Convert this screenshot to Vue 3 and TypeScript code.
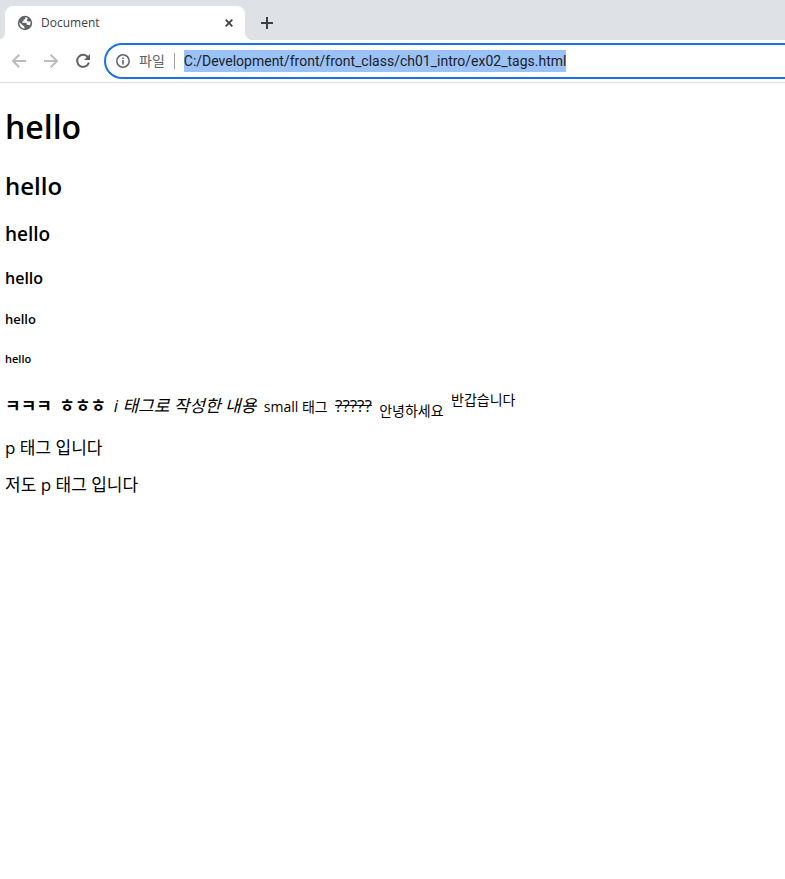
<script setup lang="ts">
import { ref } from 'vue'

const title = 'Document'
const address = ref('C:/Development/front/front_class/ch01_intro/ex02_tags.html')
</script>

<template>
  <div class="browser">
    <header>
      <div class="tab-strip">
        <div class="tab">
          <svg viewBox="0 0 16 16" width="16" height="16" aria-hidden="true">
            <circle cx="8" cy="8" r="7.2" fill="#5f6368" />
            <path d="M8.3 2.2 L8.3 3.6 Q8.2 4.5 7 4.6 L6.4 5.2 L6.4 6.4 L5.2 6.6 L5.2 7.7 L8.7 7.7 Q9.6 7.8 9.7 8.8 L9.7 9.7 L11 9.7 Q12 9.8 12.3 10.8 Q13.9 8.8 13.6 6.4 L11.2 6.4 Q9.9 6.3 9.9 5.1 L9.9 4.4 L11 3.2 Q9.8 2.2 8.3 2.2Z" fill="#fff" />
            <path d="M2.2 7.2 L5.4 10.1 Q5.8 11.1 7 11.2 L7.4 11.4 L7.4 13.8 Q2.6 12.8 2.2 7.2Z" fill="#fff" />
          </svg>
          <span class="tab-title">{{ title }}</span>
          <button type="button" class="close" aria-label="Close tab">
            <svg viewBox="0 0 8 8" width="8" height="8"><path d="M.7 .7 7.3 7.3M7.3 .7 .7 7.3" fill="none" stroke="#3c4043" stroke-width="1.7" /></svg>
          </button>
        </div>
        <button type="button" class="new-tab" aria-label="New tab">
          <svg viewBox="0 0 12 12" width="12" height="12"><path d="M6 0V12M0 6H12" fill="none" stroke="#3c4043" stroke-width="2" /></svg>
        </button>
      </div>
      <div class="toolbar">
        <button type="button" class="nav" aria-label="Back" disabled>
          <svg viewBox="0 0 16 16" width="16" height="16"><path d="M15 8H2.5M8.3 1.7 2 8l6.3 6.3" fill="none" stroke="#babcbe" stroke-width="2" /></svg>
        </button>
        <button type="button" class="nav" aria-label="Forward" disabled>
          <svg viewBox="0 0 16 16" width="16" height="16"><path d="M1 8H13.5M7.7 1.7 14 8l-6.3 6.3" fill="none" stroke="#babcbe" stroke-width="2" /></svg>
        </button>
        <button type="button" class="nav" aria-label="Reload">
          <svg viewBox="0 0 16 16" width="16" height="16">
            <path d="M13.2 4.6A6 6 0 1 0 13.9 9.5" fill="none" stroke="#5f6368" stroke-width="2" />
            <path d="M15 1V7H9Z" fill="#5f6368" />
          </svg>
        </button>
        <div class="omnibox">
          <svg viewBox="0 0 14 14" width="14" height="14" aria-hidden="true">
            <circle cx="7" cy="7" r="6.2" fill="none" stroke="#5f6368" stroke-width="1.5" />
            <path d="M6.2 3.4h1.6v1.5H6.2zM6.2 6h1.6v4.6H6.2z" fill="#5f6368" />
          </svg>
          <label class="scheme" for="address">파일</label>
          <input id="address" v-model="address" type="text" spellcheck="false" />
        </div>
      </div>
    </header>
    <main>
      <h1>hello</h1>
      <h2>hello</h2>
      <h3>hello</h3>
      <h4>hello</h4>
      <h5>hello</h5>
      <h6>hello</h6>
      <div class="inline-tags">
        <b>ㅋㅋㅋ</b> <strong>ㅎㅎㅎ</strong> <i>i 태그로 작성한 내용</i> <small>small 태그</small> <del>?????</del> <sub>안녕하세요</sub> <sup>반갑습니다</sup>
      </div>
      <p>p 태그 입니다</p>
      <p>저도 p 태그 입니다</p>
    </main>
  </div>
</template>

<style>
body {
  background: #fff;
}
</style>

<style scoped>
.browser {
  font-family: "Open Sans", "Noto Sans CJK KR", sans-serif;
  color: #000;
  overflow: hidden;
}
button {
  border: 0;
  padding: 0;
  background: none;
  display: flex;
  align-items: center;
  justify-content: center;
}
svg {
  display: block;
  flex: none;
}
.tab-strip {
  display: flex;
  align-items: flex-end;
  height: 40px;
  padding-left: 5px;
  background: #dee1e6;
}
.tab {
  position: relative;
  display: flex;
  align-items: center;
  box-sizing: border-box;
  width: 240px;
  height: 34px;
  padding: 0 8px 0 12px;
  border-radius: 8px 8px 0 0;
  background: #fff;
}
.tab::before,
.tab::after {
  content: "";
  position: absolute;
  bottom: 0;
  width: 8px;
  height: 8px;
}
.tab::before {
  right: 100%;
  background: radial-gradient(circle at 0 0, transparent 8px, #fff 8px);
}
.tab::after {
  left: 100%;
  background: radial-gradient(circle at 100% 0, transparent 8px, #fff 8px);
}
.tab-title {
  flex: 1;
  margin-left: 8px;
  font-size: 12px;
  line-height: 16px;
  color: #3c4043;
}
.close {
  width: 16px;
  height: 16px;
}
.new-tab {
  width: 28px;
  height: 34px;
  margin-left: 8px;
}
.toolbar {
  display: flex;
  align-items: center;
  height: 42px;
  padding-left: 3px;
  border-bottom: 1px solid #dadce0;
}
.nav {
  width: 32px;
  height: 32px;
}
.omnibox {
  flex: 1;
  display: flex;
  align-items: center;
  box-sizing: border-box;
  height: 36px;
  margin-left: 5px;
  padding-left: 10px;
  border: 2px solid #1a73e8;
  border-right: 0;
  border-radius: 18px 0 0 18px;
}
.scheme {
  margin: 0 9px;
  padding-right: 9px;
  border-right: 1px solid #9aa0a6;
  font-size: 14px;
  line-height: 16px;
  color: #5f6368;
}
#address {
  field-sizing: content;
  height: 22px;
  padding: 0;
  border: 0;
  outline: 0;
  background: #9ac2f7;
  font-family: Roboto, sans-serif;
  font-size: 14px;
  color: #202124;
}
main {
  padding: 0 5px;
  font-size: 17px;
  line-height: 21px;
}
h1, h2, h3, h4, h5, h6 {
  font-weight: 600;
}
h1 {
  margin: 22px 0;
  font-size: 32px;
  line-height: 43px;
}
h2 {
  margin: 20px 0;
  font-size: 24px;
  line-height: 32px;
}
h3 {
  margin: 19px 0;
  font-size: 19px;
  line-height: 25px;
}
h4 {
  margin: 21px 0;
  font-size: 16px;
  line-height: 21px;
}
h5 {
  margin: 20px 0 22px;
  font-size: 13px;
  line-height: 18px;
}
h6 {
  margin: 23px 0;
  font-size: 11px;
  line-height: 15px;
}
.inline-tags > * + * {
  margin-left: 3px;
}
small, sub, sup {
  font-size: 14px;
}
p {
  margin: 16px 0;
}
</style>
